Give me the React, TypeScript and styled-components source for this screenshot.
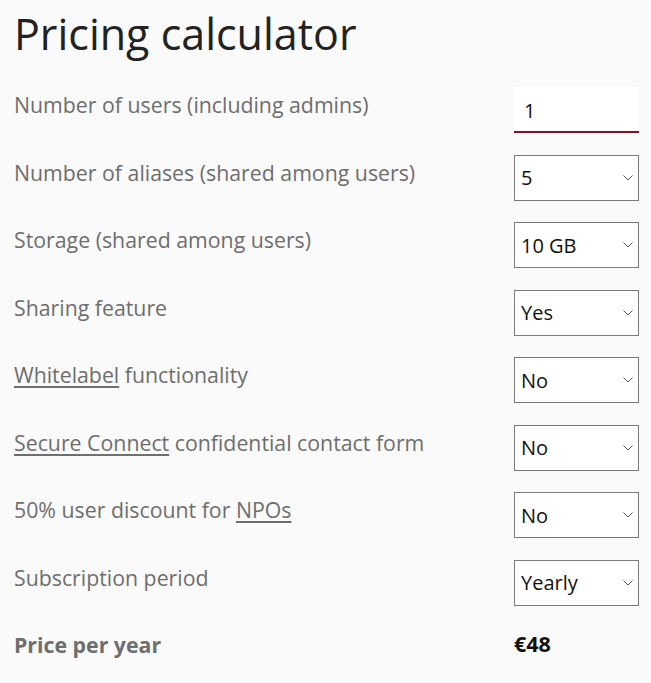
import styled, { createGlobalStyle } from 'styled-components'

const GlobalStyle = createGlobalStyle`
  html, body {
    margin: 0;
    padding: 0;
    background: #fafafa;
  }
  body {
    font-family: 'Open Sans', 'Liberation Sans', sans-serif;
  }
`

const Page = styled.div`
  padding: 6px 12px 0 14px;
`

const Title = styled.h1`
  margin: 0 0 25px 0;
  font-size: 43px;
  font-weight: 400;
  line-height: 56px;
  color: #222;
`

const Form = styled.div`
  display: grid;
  grid-template-columns: 1fr 125px;
  row-gap: 21.5px;
  align-items: start;
`

const Label = styled.label<{ $bold?: boolean }>`
  font-size: 21.3px;
  line-height: 26px;
  padding-top: 5px;
  color: #6e6e6e;
  font-weight: ${p => (p.$bold ? 700 : 400)};
  white-space: nowrap;

  a {
    color: inherit;
    text-decoration: underline;
    text-underline-offset: 3px;
  }
`

const NumberInput = styled.input`
  box-sizing: border-box;
  width: 125px;
  height: 46px;
  border: none;
  border-bottom: 2px solid #7f1420;
  background: #fff;
  padding: 2px 0 0 10px;
  font-family: inherit;
  font-size: 20px;
  color: #111;
  outline: none;
`

const SelectWrap = styled.div`
  position: relative;
  width: 125px;
  height: 46px;
`

const Select = styled.select`
  box-sizing: border-box;
  appearance: none;
  width: 100%;
  height: 100%;
  border: 1px solid #7a7a7a;
  border-radius: 0;
  background: #fff;
  padding: 0 0 0 6px;
  font-family: inherit;
  font-size: 20px;
  color: #111;
  outline: none;
`

const Chevron = styled.svg`
  position: absolute;
  right: 6px;
  top: 20px;
  pointer-events: none;
`

const Price = styled.div`
  font-size: 21.5px;
  line-height: 26px;
  padding-top: 4px;
  font-weight: 700;
  color: #111;
`

const rows: { label: React.ReactNode; value: string; options: string[] }[] = [
  { label: 'Number of aliases (shared among users)', value: '5', options: ['5', '10', '20', '50'] },
  { label: 'Storage (shared among users)', value: '10 GB', options: ['10 GB', '50 GB', '100 GB'] },
  { label: 'Sharing feature', value: 'Yes', options: ['Yes', 'No'] },
  {
    label: (
      <>
        <a href="#">Whitelabel</a> functionality
      </>
    ),
    value: 'No',
    options: ['Yes', 'No'],
  },
  {
    label: (
      <>
        <a href="#">Secure Connect</a> confidential contact form
      </>
    ),
    value: 'No',
    options: ['Yes', 'No'],
  },
  {
    label: (
      <>
        50% user discount for <a href="#">NPOs</a>
      </>
    ),
    value: 'No',
    options: ['Yes', 'No'],
  },
  { label: 'Subscription period', value: 'Yearly', options: ['Monthly', 'Yearly'] },
]

const Dropdown: React.FC<{ value: string; options: string[] }> = ({ value, options }) => (
  <SelectWrap>
    <Select defaultValue={value}>
      {options.map(o => (
        <option key={o} value={o}>
          {o}
        </option>
      ))}
    </Select>
    <Chevron width="10" height="6" viewBox="0 0 10 6">
      <path d="M0.5 0.5 L5 5 L9.5 0.5" fill="none" stroke="#555" strokeWidth="1" />
    </Chevron>
  </SelectWrap>
)

const App: React.FC = () => {
  return (
    <>
      <GlobalStyle />
      <Page>
        <Title>Pricing calculator</Title>
        <Form>
          <Label>Number of users (including admins)</Label>
          <NumberInput type="text" defaultValue="1" />
          {rows.map((r, i) => (
            <>
              <Label key={'l' + i}>{r.label}</Label>
              <Dropdown key={'d' + i} value={r.value} options={r.options} />
            </>
          ))}
          <Label $bold>Price per year</Label>
          <Price>€48</Price>
        </Form>
      </Page>
    </>
  )
}

export default App
